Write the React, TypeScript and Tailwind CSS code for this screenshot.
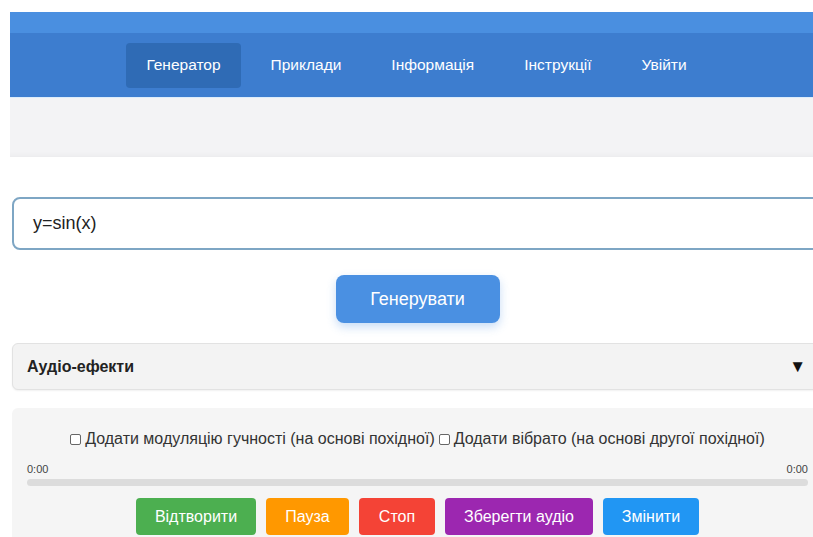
import React from "react";

const navItems = ["Генератор", "Приклади", "Інформація", "Інструкції", "Увійти"];

const controls = [
  { label: "Відтворити", cls: "bg-[#4caf50] w-[120px]" },
  { label: "Пауза", cls: "bg-[#ff9800] w-[83px]" },
  { label: "Стоп", cls: "bg-[#f44336] w-[76px]" },
  { label: "Зберегти аудіо", cls: "bg-[#9c27b0] w-[148px]" },
  { label: "Змінити", cls: "bg-[#2196f3] w-[96px]" },
];

export default function App() {
  return (
    <div
      className="w-[813px] h-[537px] overflow-hidden bg-white text-[#222]"
      style={{ fontFamily: '"Liberation Sans", Arial, sans-serif' }}
    >
      <div className="w-[813px] ml-[10px] pt-[12px]">
        {/* header */}
        <div className="h-[21px] bg-[#4a8fe0]" />
        <nav className="h-[64px] bg-[#3d7dcf] flex items-center justify-center gap-[10px]">
          {navItems.map((item, i) => (
            <a
              key={item}
              className={`h-[45px] px-[20px] flex items-center rounded-[4px] text-[15.5px] text-white ${
                i === 0 ? "bg-[#2f6bb5]" : ""
              }`}
            >
              {item}
            </a>
          ))}
        </nav>
        <div className="h-[60px] bg-[#f3f3f5] border-t border-[#dcecfb] shadow-[inset_0_-5px_4px_-3px_rgba(0,0,0,0.03)]" />

        {/* main */}
        <main className="ml-[2px] pt-[40px]">
          <div className="h-[53px] border-2 border-[#7ea6c4] rounded-[8px] flex items-center px-[19px] text-[18px] text-[#222]">
            y=sin(x)
          </div>

          <div className="flex justify-center mt-[25px]">
            <button className="w-[164px] h-[48px] rounded-[8px] bg-[#4a90e2] text-white text-[18px] shadow-[0_4px_10px_rgba(74,144,226,0.3)]">
              Генерувати
            </button>
          </div>

          <div className="mt-[20px] h-[47px] bg-[#f3f3f3] border border-[#e2e2e2] rounded-[6px] shadow-[0_1px_2px_rgba(0,0,0,0.06)] flex items-center justify-between pl-[14px] pr-[16px]">
            <span className="font-bold text-[16px] text-[#222]">Аудіо-ефекти</span>
            <span className="text-[17px] text-[#111]">▼</span>
          </div>

          <section className="mt-[18px] bg-[#f5f5f5] rounded-t-[6px] px-[15px] pt-[19px] pb-[10px]">
            <div className="flex justify-center items-center text-[16px] text-[#333] gap-[4px]">
              <label className="flex items-center gap-[4px]">
                <span className="w-[11px] h-[11px] border border-[#666] rounded-[2px] bg-white inline-block" />
                Додати модуляцію гучності (на основі похідної)
              </label>
              <label className="flex items-center gap-[4px]">
                <span className="w-[11px] h-[11px] border border-[#666] rounded-[2px] bg-white inline-block" />
                Додати вібрато (на основі другої похідної)
              </label>
            </div>
            <div className="flex justify-between text-[11px] text-[#444] mt-[11px] leading-[14px]">
              <span>0:00</span>
              <span>0:00</span>
            </div>
            <div className="h-[7px] rounded-full bg-[#dcdcdc] mt-[3px]" />
            <div className="flex justify-center gap-[10px] mt-[12px]">
              {controls.map((c) => (
                <button
                  key={c.label}
                  className={`h-[37px] rounded-[4px] text-white text-[16px] ${c.cls}`}
                >
                  {c.label}
                </button>
              ))}
            </div>
          </section>
        </main>
      </div>
    </div>
  );
}
